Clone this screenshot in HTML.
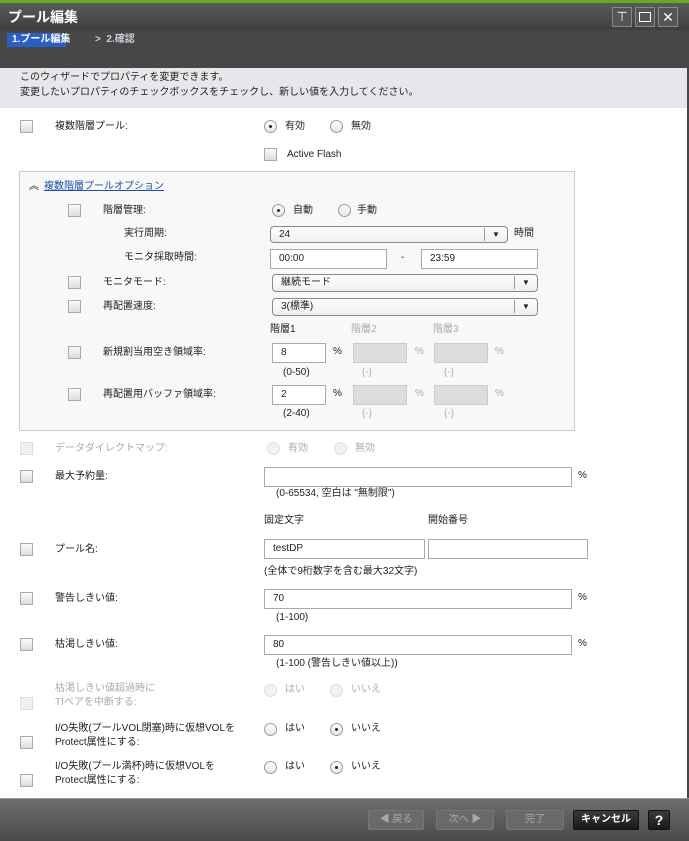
<!DOCTYPE html>
<html><head><meta charset="utf-8"><style>
*{margin:0;padding:0;box-sizing:border-box}
body{width:689px;height:841px;position:relative;overflow:hidden;background:#fff;font-family:"Liberation Sans","Noto Sans CJK JP",sans-serif;font-size:10px;color:#222}
.a{position:absolute;white-space:nowrap;line-height:12px}
.cb{position:absolute;width:13px;height:13px;border:1px solid #aaa;background:linear-gradient(#fafafa,#ddd)}
.cb.d{border-color:#ddd;background:#f0f0f0}
.rd{position:absolute;width:13px;height:13px;border:1px solid #999;border-radius:50%;background:linear-gradient(#fff,#e6e6e6)}
.rd.on::after{content:"";position:absolute;left:4px;top:4px;width:3px;height:3px;border-radius:50%;background:#222}
.rd.d{border-color:#ddd;background:#f2f2f2}
.in{position:absolute;border:1px solid #aaa;background:#fff;padding-left:8px;line-height:17px;font-size:10px}
.in.d{background:#ddd;border-color:#ccc}
.sel{position:absolute;border:1px solid #888;border-radius:4px;background:linear-gradient(#fff,#eee);padding-left:8px;line-height:15px}
.sel::after{content:"▼";position:absolute;right:0;top:1px;width:22px;height:13px;border-left:1px solid #999;text-align:center;font-size:8px;line-height:13px}
.g{color:#aaa}
.btn{position:absolute;top:810px;height:20px;border:1px solid #777;border-radius:2px;background:#6a6a6a;color:#aaa;text-align:center;line-height:18px;font-size:10px}
</style></head><body>
<div style="position:absolute;left:0;top:0;width:689px;height:68px;background:#474747"></div>
<div style="position:absolute;left:0;top:0;width:689px;height:3px;background:#5fae1c"></div>
<div style="position:absolute;left:0;top:3px;width:689px;height:27px;background:linear-gradient(#5a5a5a,#3e3e3e)"></div>
<div class="a" style="left:8px;top:9px;color:#fff;font-size:14px;font-weight:bold;line-height:16px">プール編集</div>
<div style="position:absolute;left:612px;top:7px;width:20px;height:20px;border:1px solid #888;background:#555;color:#fff;text-align:center;font-size:13px;line-height:18px">⊤</div>
<div style="position:absolute;left:635px;top:7px;width:20px;height:20px;border:1px solid #888;background:#555"><div style="position:absolute;left:3px;top:4px;width:12px;height:10px;border:1px solid #fff"></div></div>
<div style="position:absolute;left:658px;top:7px;width:20px;height:20px;border:1px solid #888;background:#555;color:#fff;text-align:center;font-size:14px;line-height:18px">✕</div>
<div class="a" style="left:7px;top:33px;width:59px;height:14px;background:#2b5fc8;color:#fff;font-weight:bold;padding-left:5px;line-height:14px">1.プール編集</div>
<div class="a" style="left:95px;top:34px;color:#ccd;font-weight:bold">&gt;&nbsp; 2.確認</div>
<div style="position:absolute;left:0;top:68px;width:689px;height:40px;background:#e5e7ea"></div>
<div class="a" style="left:20px;top:72px">このウィザードでプロパティを変更できます。</div>
<div class="a" style="left:20px;top:87px">変更したいプロパティのチェックボックスをチェックし、新しい値を入力してください。</div>
<div style="position:absolute;left:687px;top:68px;width:2px;height:730px;background:#474747"></div>

<div class="cb" style="left:20px;top:120px"></div><div class="a" style="left:55px;top:121px">複数階層プール:</div>
<div class="rd on" style="left:264px;top:120px"></div><div class="a" style="left:285px;top:121px">有効</div>
<div class="rd" style="left:330px;top:120px"></div><div class="a" style="left:351px;top:121px">無効</div>
<div class="cb" style="left:264px;top:148px"></div><div class="a" style="left:287px;top:149px">Active Flash</div>

<div style="position:absolute;left:19px;top:171px;width:556px;height:260px;border:1px solid #ccc;background:#f8f8f8"></div>
<div class="a" style="left:29px;top:181px;font-size:10px">︽</div>
<div class="a" style="left:44px;top:181px;color:#1a4fb0;text-decoration:underline">複数階層プールオプション</div>
<div class="cb" style="left:68px;top:204px"></div><div class="a" style="left:103px;top:205px">階層管理:</div>
<div class="rd on" style="left:272px;top:204px"></div><div class="a" style="left:293px;top:205px">自動</div>
<div class="rd" style="left:338px;top:204px"></div><div class="a" style="left:357px;top:205px">手動</div>
<div class="a" style="left:124px;top:228px">実行周期:</div>
<div class="sel" style="left:270px;top:226px;width:238px;height:17px">24</div><div class="a" style="left:514px;top:228px">時間</div>
<div class="a" style="left:124px;top:252px">モニタ採取時間:</div>
<div class="in" style="left:270px;top:249px;width:117px;height:20px">00:00</div>
<div class="a" style="left:401px;top:252px">-</div>
<div class="in" style="left:421px;top:249px;width:117px;height:20px">23:59</div>
<div class="cb" style="left:68px;top:276px"></div><div class="a" style="left:103px;top:277px">モニタモード:</div>
<div class="sel" style="left:272px;top:274px;width:266px;height:18px">継続モード</div>
<div class="cb" style="left:68px;top:300px"></div><div class="a" style="left:103px;top:301px">再配置速度:</div>
<div class="sel" style="left:272px;top:298px;width:266px;height:18px">3(標準)</div>
<div class="a" style="left:270px;top:324px">階層1</div><div class="a g" style="left:351px;top:324px">階層2</div><div class="a g" style="left:433px;top:324px">階層3</div>
<div class="cb" style="left:68px;top:346px"></div><div class="a" style="left:103px;top:347px">新規割当用空き領域率:</div>
<div class="in" style="left:272px;top:343px;width:54px;height:20px">8</div><div class="a" style="left:333px;top:346px">%</div>
<div class="in d" style="left:353px;top:343px;width:54px;height:20px"></div><div class="a g" style="left:415px;top:346px">%</div>
<div class="in d" style="left:434px;top:343px;width:54px;height:20px"></div><div class="a g" style="left:495px;top:346px">%</div>
<div class="a" style="left:283px;top:367px">(0-50)</div><div class="a g" style="left:362px;top:367px">(-)</div><div class="a g" style="left:444px;top:367px">(-)</div>
<div class="cb" style="left:68px;top:388px"></div><div class="a" style="left:103px;top:389px">再配置用バッファ領域率:</div>
<div class="in" style="left:272px;top:385px;width:54px;height:20px">2</div><div class="a" style="left:333px;top:388px">%</div>
<div class="in d" style="left:353px;top:385px;width:54px;height:20px"></div><div class="a g" style="left:415px;top:388px">%</div>
<div class="in d" style="left:434px;top:385px;width:54px;height:20px"></div><div class="a g" style="left:495px;top:388px">%</div>
<div class="a" style="left:283px;top:408px">(2-40)</div><div class="a g" style="left:362px;top:408px">(-)</div><div class="a g" style="left:444px;top:408px">(-)</div>

<div class="cb d" style="left:20px;top:442px"></div><div class="a g" style="left:55px;top:443px">データダイレクトマップ:</div>
<div class="rd d" style="left:267px;top:442px"></div><div class="a g" style="left:288px;top:443px">有効</div>
<div class="rd d" style="left:334px;top:442px"></div><div class="a g" style="left:355px;top:443px">無効</div>
<div class="cb" style="left:20px;top:470px"></div><div class="a" style="left:55px;top:471px">最大予約量:</div>
<div class="in" style="left:264px;top:467px;width:308px;height:20px"></div><div class="a" style="left:578px;top:470px">%</div>
<div class="a" style="left:276px;top:488px">(0-65534, 空白は "無制限")</div>
<div class="a" style="left:264px;top:515px">固定文字</div><div class="a" style="left:428px;top:515px">開始番号</div>
<div class="cb" style="left:20px;top:543px"></div><div class="a" style="left:55px;top:544px">プール名:</div>
<div class="in" style="left:264px;top:539px;width:161px;height:20px">testDP</div>
<div class="in" style="left:428px;top:539px;width:160px;height:20px"></div>
<div class="a" style="left:264px;top:566px">(全体で9桁数字を含む最大32文字)</div>
<div class="cb" style="left:20px;top:592px"></div><div class="a" style="left:55px;top:593px">警告しきい値:</div>
<div class="in" style="left:264px;top:589px;width:308px;height:20px">70</div><div class="a" style="left:578px;top:592px">%</div>
<div class="a" style="left:276px;top:612px">(1-100)</div>
<div class="cb" style="left:20px;top:638px"></div><div class="a" style="left:55px;top:639px">枯渇しきい値:</div>
<div class="in" style="left:264px;top:635px;width:308px;height:20px">80</div><div class="a" style="left:578px;top:638px">%</div>
<div class="a" style="left:276px;top:658px">(1-100 (警告しきい値以上))</div>

<div class="cb d" style="left:20px;top:697px"></div>
<div class="a g" style="left:55px;top:683px">枯渇しきい値超過時に</div><div class="a g" style="left:55px;top:697px">TIペアを中断する:</div>
<div class="rd d" style="left:264px;top:684px"></div><div class="a g" style="left:285px;top:684px">はい</div>
<div class="rd d" style="left:330px;top:684px"></div><div class="a g" style="left:351px;top:684px">いいえ</div>
<div class="cb" style="left:20px;top:736px"></div>
<div class="a" style="left:55px;top:723px">I/O失敗(プールVOL閉塞)時に仮想VOLを</div><div class="a" style="left:55px;top:737px">Protect属性にする:</div>
<div class="rd" style="left:264px;top:723px"></div><div class="a" style="left:285px;top:723px">はい</div>
<div class="rd on" style="left:330px;top:723px"></div><div class="a" style="left:351px;top:723px">いいえ</div>
<div class="cb" style="left:20px;top:774px"></div>
<div class="a" style="left:55px;top:761px">I/O失敗(プール満杯)時に仮想VOLを</div><div class="a" style="left:55px;top:775px">Protect属性にする:</div>
<div class="rd" style="left:264px;top:761px"></div><div class="a" style="left:285px;top:761px">はい</div>
<div class="rd on" style="left:330px;top:761px"></div><div class="a" style="left:351px;top:761px">いいえ</div>

<div style="position:absolute;left:0;top:798px;width:689px;height:43px;background:linear-gradient(#6e6e6e,#4a4a4a);border-top:1px solid #999"></div>
<div class="btn" style="left:368px;width:56px">◀ 戻る</div>
<div class="btn" style="left:436px;width:58px">次へ ▶</div>
<div class="btn" style="left:506px;width:58px">完了</div>
<div class="btn" style="left:573px;width:66px;background:linear-gradient(#3a3a3a,#1a1a1a);border-color:#111;color:#fff;font-weight:bold">キャンセル</div>
<div class="btn" style="left:648px;width:22px;background:linear-gradient(#3a3a3a,#1a1a1a);border-color:#111;color:#fff;font-weight:bold;font-size:14px">?</div>
</body></html>
